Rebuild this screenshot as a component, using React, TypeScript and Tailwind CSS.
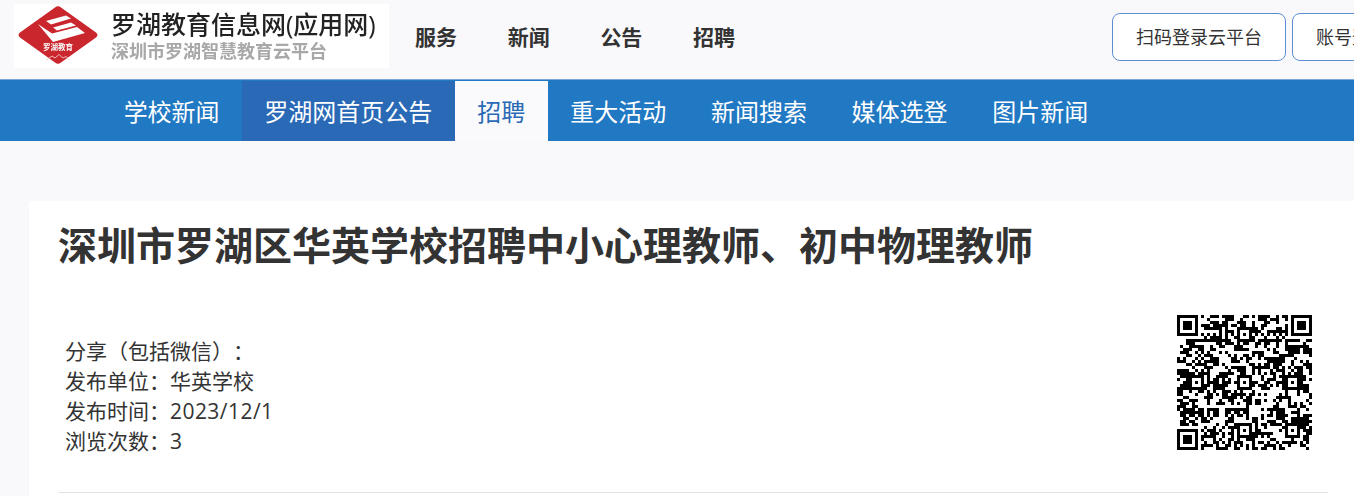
import React from "react";

const QR_SIZE = 45;

// reserved regions of a version 7 QR code, everything else gets filled with noise
const buildQr = (): boolean[][] => {
  const grid: boolean[][] = [];
  let seed = 20231201;
  const next = () => {
    seed = (seed * 1103515245 + 12345) & 0x7fffffff;
    return (seed >> 12) % 100;
  };
  for (let y = 0; y < QR_SIZE; y++) {
    const row: boolean[] = [];
    for (let x = 0; x < QR_SIZE; x++) {
      const left = x > 0 ? row[x - 1] : false;
      const up = y > 0 ? grid[y - 1][x] : false;
      const bias = 42 + (left ? 10 : 0) + (up ? 8 : 0);
      row.push(next() < bias);
    }
    grid.push(row);
  }

  const finder = (ox: number, oy: number) => {
    for (let y = -1; y <= 7; y++) {
      for (let x = -1; x <= 7; x++) {
        const gx = ox + x;
        const gy = oy + y;
        if (gx < 0 || gy < 0 || gx >= QR_SIZE || gy >= QR_SIZE) continue;
        const ring = x === 0 || x === 6 || y === 0 || y === 6;
        const inside = x >= 0 && x <= 6 && y >= 0 && y <= 6;
        const core = x >= 2 && x <= 4 && y >= 2 && y <= 4;
        grid[gy][gx] = inside && (ring || core);
      }
    }
  };
  finder(0, 0);
  finder(QR_SIZE - 7, 0);
  finder(0, QR_SIZE - 7);

  for (let i = 8; i < QR_SIZE - 8; i++) {
    grid[6][i] = i % 2 === 0;
    grid[i][6] = i % 2 === 0;
  }

  const align = (cx: number, cy: number) => {
    for (let y = -2; y <= 2; y++) {
      for (let x = -2; x <= 2; x++) {
        grid[cy + y][cx + x] = Math.max(Math.abs(x), Math.abs(y)) !== 1;
      }
    }
  };
  align(22, 6);
  align(6, 22);
  align(22, 22);
  align(38, 22);
  align(22, 38);
  align(38, 38);
  return grid;
};

const QrCode = () => {
  const grid = buildQr();
  return (
    <svg width={135} height={135} viewBox="0 0 45 45" shapeRendering="crispEdges" className="block">
      {grid.map((row, y) =>
        row.map((on, x) => (on ? <rect key={`${x}-${y}`} x={x} y={y} width={1} height={1} fill="#000" /> : null))
      )}
    </svg>
  );
};

const Logo = () => (
  <svg width={90} height={64} viewBox="14 4 90 64" className="block shrink-0">
    <path
      d="M55 7.5 Q58 5 61 7.5 L96 32.5 Q99 35 96 37.5 L61 62.5 Q58 65 55 62.5 L20 37.5 Q17 35 20 32.5 Z"
      fill="#c9262d"
    />
    <path d="M38 24 L52 33.5 L77 27 L85 33 L53 42 Z" fill="#fff" />
    <path d="M46 21 L66 15.5 L71 18.5 L51 24.5 Z" fill="#fff" />
    <path d="M53 27.5 L71 22.5 L76 25.5 L57 30.5 Z" fill="#fff" />
    <text x={58} y={49.5} textAnchor="middle" fontSize={7.5} fontWeight={700} fill="#fff">
      罗湖教育
    </text>
    <path d="M46 60 L52 56 L55 58 L59 54.5 L63 58 L66 56.5 L70 60" fill="none" stroke="#f3c9ca" strokeWidth={0.9} />
  </svg>
);

const topLinks = ["服务", "新闻", "公告", "招聘"];
const navItems = ["学校新闻", "罗湖网首页公告", "招聘", "重大活动", "新闻搜索", "媒体选登", "图片新闻"];

const App: React.FC = () => {
  return (
    <div className="h-[496px] w-full overflow-hidden bg-[#f9f9fb] font-['Open_Sans','Noto_Sans_CJK_SC',sans-serif] text-[#333] [text-spacing-trim:space-all]">
      <header className="flex h-[79px] items-start overflow-hidden pl-[14px]">
        <div className="mt-1 flex h-[64px] w-[375px] shrink-0 items-center bg-white blur-[0.4px]">
          <Logo />
          <div className="ml-[7px] flex flex-col">
            <span className="text-[25px] leading-[30px] font-medium whitespace-nowrap text-[#222]">罗湖教育信息网(应用网)</span>
            <span className="text-[18px] leading-[24px] font-bold whitespace-nowrap text-[#a8a8a8]">深圳市罗湖智慧教育云平台</span>
          </div>
        </div>
        <nav className="ml-[26px] flex h-[76px] shrink-0 items-center gap-[50.7px]">
          {topLinks.map((link) => (
            <a key={link} className="text-[21px] font-bold text-[#333]">
              {link}
            </a>
          ))}
        </nav>
        <div className="mt-[13px] ml-[376.9px] flex shrink-0 gap-[6px]">
          <button className="h-[48px] w-[174px] shrink-0 rounded-lg border border-[#5b8fd2] bg-white pt-px text-[18px]">扫码登录云平台</button>
          <button className="h-[48px] w-[174px] shrink-0 rounded-lg border border-[#5b8fd2] bg-white pt-px text-[18px]">账号登录云平台</button>
        </div>
      </header>
      <div className="h-px bg-[#76a9d8]" />
      <nav className="flex h-[61px] items-end bg-[#2178c3] pl-[101.3px]">
        {navItems.map((item) => {
          const isHover = item === "罗湖网首页公告";
          const isActive = item === "招聘";
          return (
            <a
              key={item}
              className={
                isActive
                  ? "flex h-[60px] w-[93.3px] items-center justify-center bg-[#fafafc] pt-px text-[24px] text-[#2a69b6]"
                  : isHover
                    ? "flex h-[60px] items-center bg-[#2a69b6] px-[22.33px] pt-px text-[24px] text-white"
                    : "flex h-[60px] items-center px-[22.33px] pt-px text-[24px] text-white"
              }
            >
              {item}
            </a>
          );
        })}
      </nav>
      <main className="mt-[60px] ml-[29px] w-[1328px] rounded bg-white px-[29px] pb-10">
        <h1 className="text-[39px] leading-[88px] font-bold whitespace-nowrap text-[#333]">
          深圳市罗湖区华英学校招聘中小心理教师、初中物理教师
        </h1>
        <div className="flex h-[203px] items-start justify-between">
          <div className="mt-[47px] ml-[7px] text-[21px] leading-[30px] text-[#333]">
            <p>分享（包括微信）：</p>
            <p>发布单位：华英学校</p>
            <p>
              发布时间：<span className="tracking-[0.45px]">2023/12/1</span>
            </p>
            <p>浏览次数：3</p>
          </div>
          <div className="mt-[26px] mr-[16px]">
            <QrCode />
          </div>
        </div>
        <hr className="border-t border-[#e2e2e4]" />
      </main>
    </div>
  );
};

export default App;
